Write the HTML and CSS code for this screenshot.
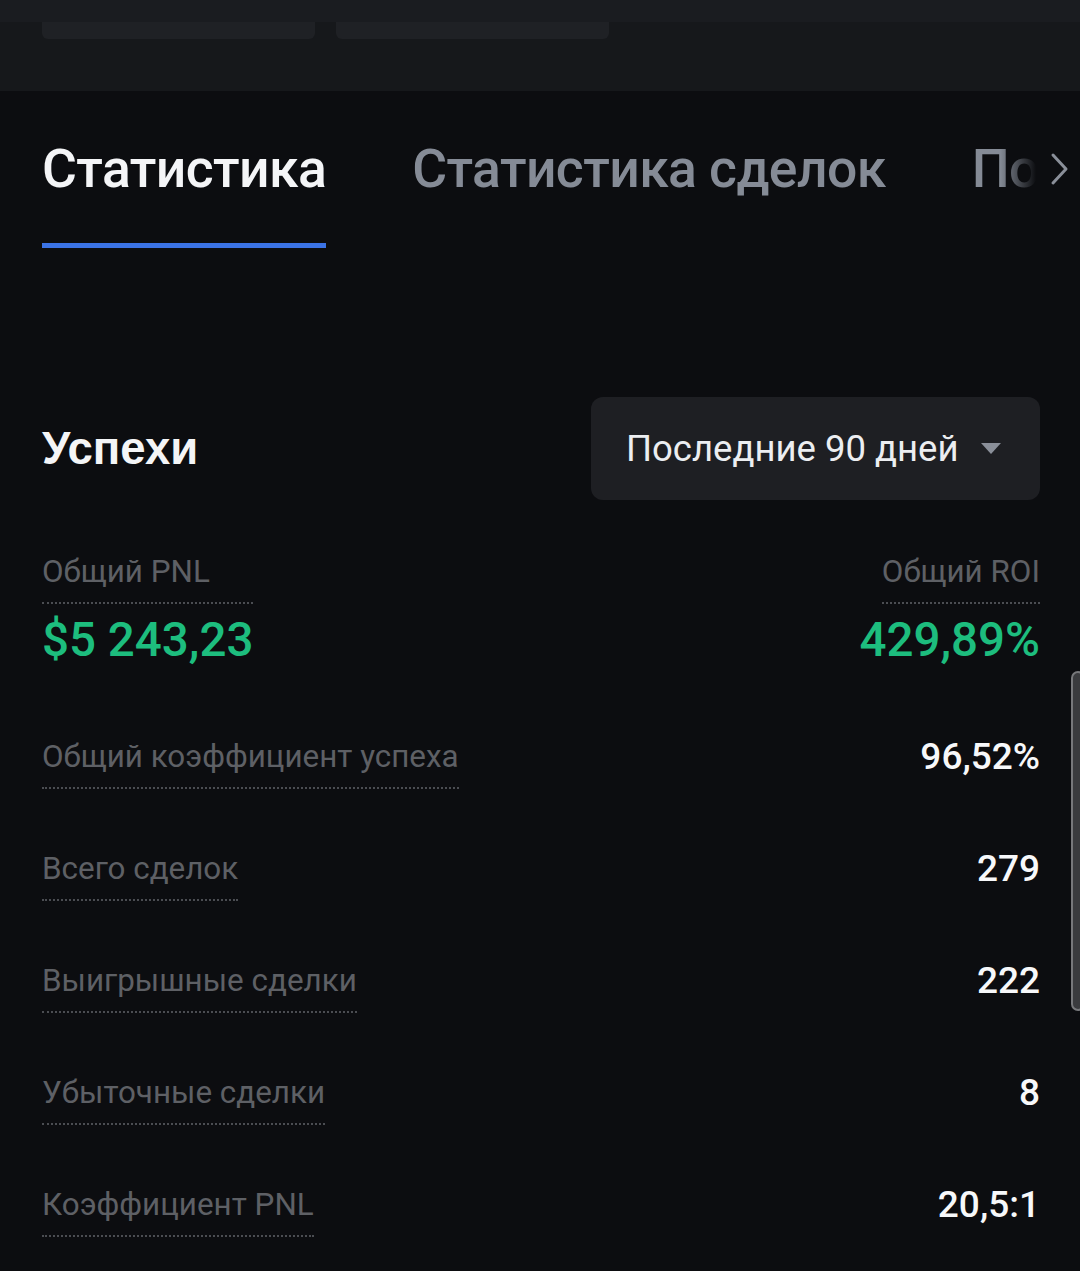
FILE: index.html
```html
<html>
<head>
<title>Статистика</title>
<link rel="stylesheet" href="styles.css">
</head>
<body>

<div class="topbar">
<div class="topstrip"></div>
<div class="skeletons">
<div class="skel"></div>
<div class="skel"></div>
</div>
</div>

<div class="tabs">
<div class="tab active">Статистика</div>
<div class="tab">Статистика сделок</div>
<div class="tab">По</div>
<div class="tabs-fade">
<svg width="22" height="36" viewBox="0 0 22 36"><path d="M4 4 L17 18 L4 32" fill="none" stroke="#8a8f99" stroke-width="3" stroke-linecap="round" stroke-linejoin="round"/></svg>
</div>
</div>

<div class="section-head">
<h2>Успехи</h2>
<div class="dropdown">
<span>Последние 90 дней</span>
<span class="caret"></span>
</div>
</div>

<div class="totals">
<div class="total">
<span class="label">Общий PNL</span>
<div class="big green">$5 243,23</div>
</div>
<div class="total right">
<span class="label">Общий ROI</span>
<div class="big green">429,89%</div>
</div>
</div>

<ul class="stats">
<li><span class="label">Общий коэффициент успеха</span><span class="value">96,52%</span></li>
<li><span class="label">Всего сделок</span><span class="value">279</span></li>
<li><span class="label">Выигрышные сделки</span><span class="value">222</span></li>
<li><span class="label">Убыточные сделки</span><span class="value">8</span></li>
<li><span class="label">Коэффициент PNL</span><span class="value">20,5:1</span></li>
</ul>

<div class="scrollbar"></div>

</body>
</html>
```

FILE: styles.css
```css
body{
margin: 0;
background-color: #0c0d10;
font-family: Roboto, "Noto Sans", sans-serif;
color: #f4f5f7;
overflow: hidden;
height: 1271px;
position: relative;
}
.topbar{
height: 91px;
background-color: #16181b;
}
.topstrip{
height: 22px;
background-color: #1a1c20;
}
.skeletons{
display: flex;
gap: 21px;
padding: 0 42px;
}
.skel{
width: 273px;
height: 17px;
background-color: #1f2125;
border-radius: 0 0 6px 6px;
}
.tabs{
display: flex;
gap: 86px;
padding: 46px 0 0 42px;
position: relative;
overflow: hidden;
white-space: nowrap;
}
.tab{
font-size: 53.5px;
font-weight: 500;
line-height: 64px;
color: #858b96;
padding-bottom: 42px;
border-bottom: 5px solid transparent;
letter-spacing: -0.6px;
}
.tab.active{
color: #f4f5f7;
border-bottom-color: #3b73e6;
}
.tabs-fade{
position: absolute;
top: 0;
bottom: 0;
left: 1000px;
right: 0;
background: linear-gradient(to right, rgba(12,13,16,0) 0px, #0c0d10 36px);
padding-left: 49px;
padding-top: 60px;
}
.section-head{
display: flex;
justify-content: space-between;
align-items: center;
margin: 149px 40px 0 42px;
}
h2{
margin: 0;
font-family: "Liberation Sans", Arial, sans-serif;
font-size: 45.5px;
font-weight: 700;
color: #f4f5f7;
}
.dropdown{
flex-shrink: 0;
width: 449px;
height: 103px;
box-sizing: border-box;
padding: 0 40px 0 35px;
background-color: #1e1f23;
border-radius: 12px;
display: flex;
align-items: center;
gap: 22px;
font-size: 36.5px;
color: #eceef1;
white-space: nowrap;
}
.caret{
width: 0;
height: 0;
border-left: 10px solid transparent;
border-right: 10px solid transparent;
border-top: 11px solid #8a8f99;
}
.totals{
display: flex;
justify-content: space-between;
margin: 52px 40px 0 42px;
}
.total{
display: flex;
flex-direction: column;
align-items: stretch;
}
.total.right{
align-items: flex-end;
}
.label{
font-size: 31.4px;
line-height: 40px;
color: #5e6065;
padding-bottom: 10px;
border-bottom: 2px dotted #4b4d52;
}
.big{
font-size: 47.5px;
font-weight: 500;
line-height: 56px;
margin-top: 8px;
}
.green{
color: #1dbd7e;
}
.stats{
list-style-type: none;
margin: 69px 40px 0 42px;
padding: 0;
}
.stats li{
display: flex;
justify-content: space-between;
align-items: flex-start;
height: 112px;
}
.value{
font-size: 37px;
font-weight: 500;
line-height: 40px;
color: #f7f8fa;
}
.scrollbar{
position: absolute;
left: 1071px;
top: 671px;
width: 14px;
height: 340px;
box-sizing: border-box;
background-color: #3a3b3e;
border: 2px solid #77787b;
border-radius: 8px;
}
```
